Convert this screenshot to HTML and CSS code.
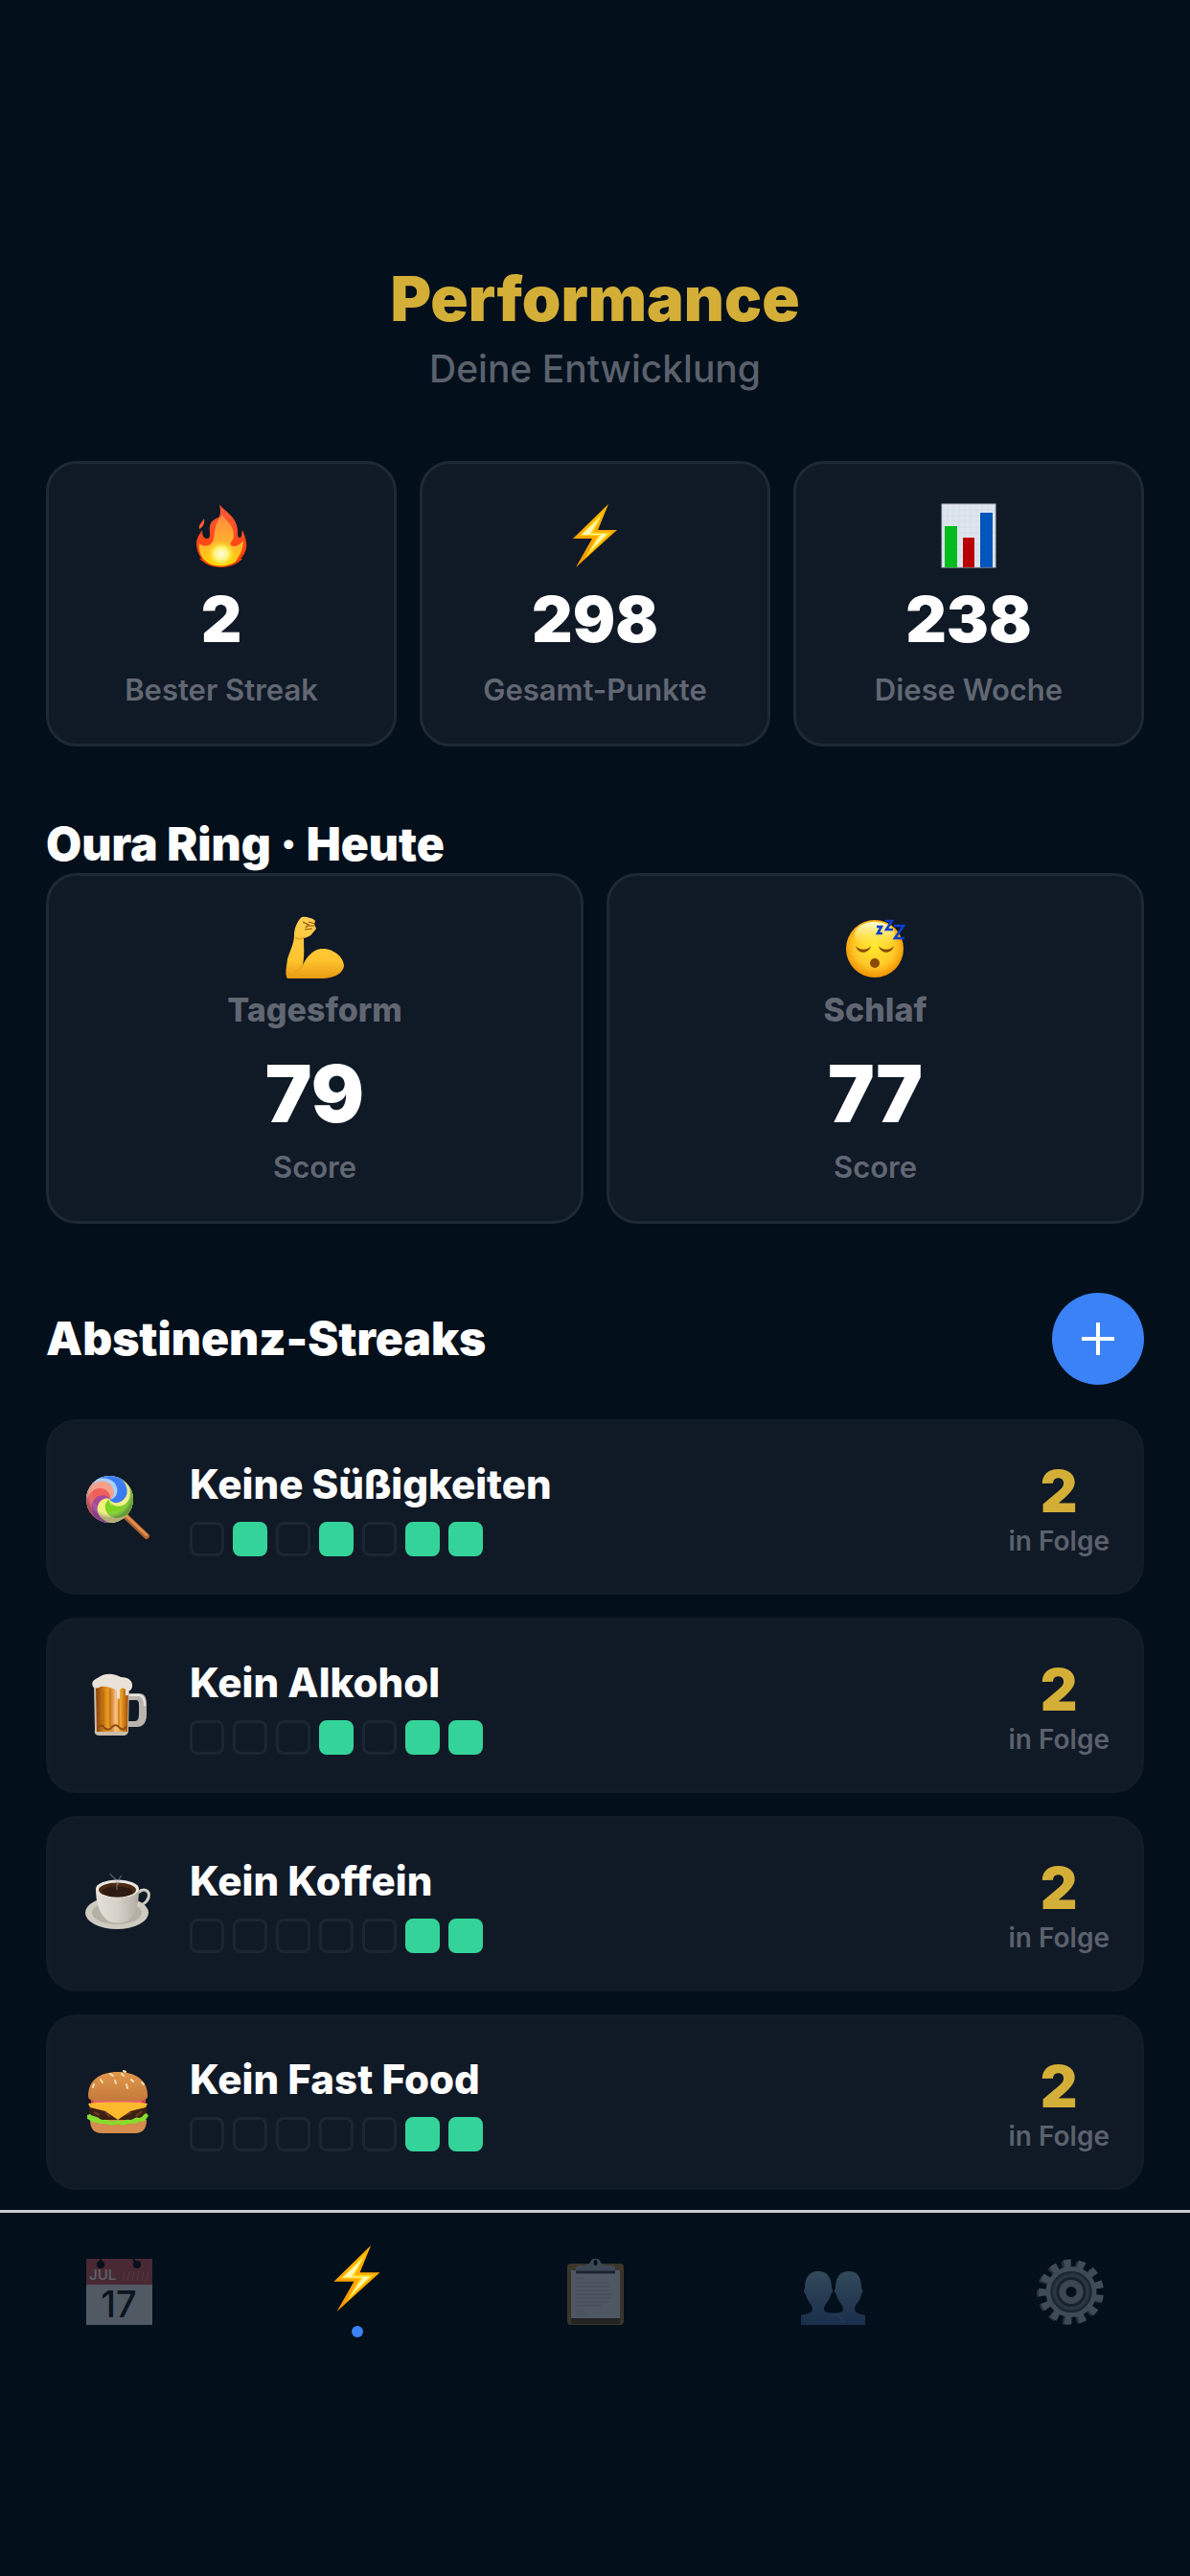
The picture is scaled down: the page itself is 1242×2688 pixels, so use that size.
FILE: index.html
```html
<!DOCTYPE html>
<html lang="de">
<head>
  <meta charset="UTF-8">
  <meta name="viewport" content="width=device-width, initial-scale=1.0">
  <title>Performance</title>
  <link rel="stylesheet" href="styles.css">
</head>
<body>
  <!-- shared gradients and the bolt, which is used twice -->
  <svg class="defs" aria-hidden="true">
    <defs>
      <linearGradient id="boltGrad" x1="0" y1="0" x2="0" y2="1">
        <stop offset="0" stop-color="#ffb800"/>
        <stop offset="1" stop-color="#ff9500"/>
      </linearGradient>
      <symbol id="bolt" viewBox="0 0 66 66">
        <path d="M47 0 L10 36 H30 L13 66 L56 27 H36 Z" fill="url(#boltGrad)"/>
        <path d="M42 8 L17 33 H36 L22 57 L50 29.500 H31 Z" fill="#ffd60a"/>
        <path d="M39 13 L19 32 H39 L26 51 L46 31 H28 Z" fill="#fff7b8"/>
      </symbol>
    </defs>
  </svg>

  <div class="app">
    <main class="content">
      <header class="page-header">
        <h1>Performance</h1>
        <p>Deine Entwicklung</p>
      </header>

      <section class="stats">
        <div class="card">
          <svg class="icon" viewBox="0 0 66 66" aria-hidden="true">
            <defs>
              <linearGradient id="fire" x1="0" y1="0" x2="0" y2="1">
                <stop offset="0" stop-color="#ff5a3c"/>
                <stop offset="1" stop-color="#ff3d00"/>
              </linearGradient>
              <linearGradient id="fireMid" x1="0" y1="0" x2="0" y2="1">
                <stop offset="0" stop-color="#ff8a3c"/>
                <stop offset="0.600" stop-color="#ffb52e"/>
                <stop offset="1" stop-color="#ffd500"/>
              </linearGradient>
              <radialGradient id="fireCore">
                <stop offset="0" stop-color="#fffde0"/>
                <stop offset="0.500" stop-color="#fff47a"/>
                <stop offset="1" stop-color="#ffd500" stop-opacity="0"/>
              </radialGradient>
            </defs>
            <path d="M31 0 C34 6 49 12 50 27 C50 32 50 35 52 35 C55 35 54 30 55 27 C58 34 60 40 59 46 C58 51 56 54 53 57 L55 57 C51 62 41 66 33 66 C23 66 14 62 10 56 L13 57 C9 53 7 47 7 41 C7 36 10 32 13 27 C13 32 14 36 18 36 C23 36 20 29 21 23 C22 18 25 16 30 14 C33 11 32 5 31 0 Z" fill="url(#fire)"/>
            <path d="M15 15 C16 20 14 24 10 26 C9 21 13 19 15 15 Z" fill="#ff5a3c"/>
            <path d="M34 11 C37 18 46 20 46 33 C46 39 41 39 43 43 C47 46 53 42 56 38 C56 48 51 55 48 60 C40 66 24 66 17 60 C12 56 9 49 10 41 C14 45 23 45 25 36 C27 27 25 22 34 11 Z" fill="url(#fireMid)"/>
            <ellipse cx="33" cy="52" rx="15" ry="14" fill="url(#fireCore)"/>
          </svg>
          <div class="stat-value">2</div>
          <div class="label">Bester Streak</div>
        </div>
        <div class="card">
          <svg class="icon" aria-hidden="true"><use href="#bolt"/></svg>
          <div class="stat-value">298</div>
          <div class="label">Gesamt-Punkte</div>
        </div>
        <div class="card">
          <svg class="icon" viewBox="0 0 66 66" aria-hidden="true">
            <rect x="5" y="0" width="56" height="66" fill="#dfe6ee"/>
            <path d="M5 6H61M5 12H61M5 18H61M5 24H61M5 30H61M5 36H61M5 42H61M5 48H61M5 54H61M5 60H61M11 0V66M17 0V66M23 0V66M29 0V66M35 0V66M41 0V66M47 0V66M53 0V66" stroke="#d2dee9" stroke-width="1"/>
            <rect x="5" y="0" width="56" height="66" fill="none" stroke="#b9bec4" stroke-width="1"/>
            <rect x="8" y="23" width="13" height="43" fill="#06bb1d"/>
            <rect x="27" y="35" width="12" height="31" fill="#b90000"/>
            <rect x="45" y="9" width="13" height="57" fill="#0456bd"/>
          </svg>
          <div class="stat-value">238</div>
          <div class="label">Diese Woche</div>
        </div>
      </section>

      <section class="section">
        <h2>Oura Ring · Heute</h2>
        <div class="scores">
          <div class="card">
            <svg class="icon" viewBox="0 0 66 66" aria-hidden="true">
              <defs>
                <linearGradient id="arm" x1="0" y1="0" x2="0" y2="1">
                  <stop offset="0" stop-color="#ffcf55"/>
                  <stop offset="0.700" stop-color="#ffc42e"/>
                  <stop offset="1" stop-color="#e89a12"/>
                </linearGradient>
              </defs>
              <path d="M19 1 C22 0 31 2 33 5 L32 8 L34 13 L30 18 C28 21 24 22 21 23 C21 32 22 42 20 51 C24 43 30 35 39 34 C50 33 62 41 63 51 C63 60 51 66 35 65 C26 65 12 65 4 65 C1 61 3 53 4 45 C6 37 11 29 11 20 C11 12 15 4 19 1 Z" fill="url(#arm)"/>
              <path d="M20 51 C18 55 15 57 11 58 M12 22 C15 25 19 24 21 22" fill="none" stroke="#e3a11d" stroke-width="1.500"/>
              <path d="M20 6 L26 9 L23 12 M26 6 L33 8 M25 10 L33 10 M22 14 L30 13" fill="none" stroke="#8a5200" stroke-width="1.200"/>
            </svg>
            <div class="score-name">Tagesform</div>
            <div class="score-value">79</div>
            <div class="label">Score</div>
          </div>
          <div class="card">
            <svg class="icon" viewBox="0 0 66 66" aria-hidden="true">
              <defs>
                <radialGradient id="face" cx="0.500" cy="0.450" r="0.550">
                  <stop offset="0" stop-color="#ffe92e"/>
                  <stop offset="0.650" stop-color="#ffc928"/>
                  <stop offset="1" stop-color="#f29100"/>
                </radialGradient>
                <linearGradient id="shine" x1="0" y1="0" x2="0" y2="1">
                  <stop offset="0" stop-color="#ffffd8"/>
                  <stop offset="1" stop-color="#fff45c" stop-opacity="0"/>
                </linearGradient>
              </defs>
              <circle cx="32" cy="34" r="30" fill="url(#face)"/>
              <ellipse cx="32" cy="19" rx="21" ry="13" fill="url(#shine)"/>
              <path d="M12 31 C16 36 24 36 28 31 C26 40 14 40 12 31 Z M36 31 C40 36 48 36 52 31 C50 40 38 40 36 31 Z" fill="#8a4a00"/>
              <ellipse cx="32" cy="49" rx="5" ry="5" fill="#8a4a00"/>
              <path d="M34 11 H39 L35 18 H40 M43 5 H50 L44 14 H51 M52 10 H62 L53 23 H63" fill="none" stroke="#0b3fcb" stroke-width="2.600"/>
            </svg>
            <div class="score-name">Schlaf</div>
            <div class="score-value">77</div>
            <div class="label">Score</div>
          </div>
        </div>
      </section>

      <section class="section">
        <div class="section-head">
          <h2>Abstinenz-Streaks</h2>
          <button class="add-btn" type="button" aria-label="Streak hinzufügen">
            <svg viewBox="0 0 36 36" aria-hidden="true"><path d="M18 1V35M1 18H35" stroke="#fff" stroke-width="4"/></svg>
          </button>
        </div>

        <div class="streaks">
          <div class="streak">
            <div class="streak-icon">
              <svg class="icon" viewBox="0 0 66 66" aria-hidden="true">
                <defs>
                  <clipPath id="candy"><circle r="24.500"/></clipPath>
                  <path id="swirl" d="M0 0 C-6 10 16 24 25 0 L30 26 L12.500 21.700 C-12.800 25.900 -11.700 -0.200 0 0 Z"/>
                  <radialGradient id="candyShade" cx="0.500" cy="0.400">
                    <stop offset="0.700" stop-color="#fff" stop-opacity="0"/>
                    <stop offset="1" stop-color="#3c2a6a" stop-opacity="0.350"/>
                  </radialGradient>
                </defs>
                <path d="M42 43 L63 63" stroke="#a85f30" stroke-width="6" stroke-linecap="round"/>
                <path d="M42 42 L63 62" stroke="#e09050" stroke-width="3" stroke-linecap="round"/>
                <g transform="translate(24.500 24.500)" clip-path="url(#candy)">
                  <circle r="25" fill="#f5f28a"/>
                  <use href="#swirl" fill="#7ed321" transform="rotate(-20)"/>
                  <use href="#swirl" fill="#f3f17a" transform="rotate(40)"/>
                  <use href="#swirl" fill="#a8489a" transform="rotate(88)"/>
                  <use href="#swirl" fill="#f0605a" transform="rotate(125)"/>
                  <use href="#swirl" fill="#f6a08a" transform="rotate(170)"/>
                  <use href="#swirl" fill="#a9d0fb" transform="rotate(215)"/>
                  <use href="#swirl" fill="#3b7cf2" transform="rotate(240)"/>
                  <path d="M0 0 C-6 10 16 24 25 0 L30 26 L12.500 21.700 C4 25 -6 14 0 0 Z" fill="#7ed321" transform="rotate(-35)"/>
                  <circle r="24.500" fill="url(#candyShade)"/>
                </g>
              </svg>
            </div>
            <div class="streak-info">
              <h3>Keine Süßigkeiten</h3>
              <div class="days">
                <span class="day"></span>
                <span class="day done"></span>
                <span class="day"></span>
                <span class="day done"></span>
                <span class="day"></span>
                <span class="day done"></span>
                <span class="day done"></span>
              </div>
            </div>
            <div class="streak-count">
              <div class="count">2</div>
              <div class="count-label">in Folge</div>
            </div>
          </div>

          <div class="streak">
            <div class="streak-icon">
              <svg class="icon" viewBox="0 0 66 66" aria-hidden="true">
                <defs>
                  <linearGradient id="beer" x1="0" y1="0" x2="1" y2="0">
                    <stop offset="0" stop-color="#8a3d08"/>
                    <stop offset="0.350" stop-color="#e89a1a"/>
                    <stop offset="0.500" stop-color="#d98a3a"/>
                    <stop offset="0.600" stop-color="#f5c08a"/>
                    <stop offset="0.750" stop-color="#f0a62a"/>
                    <stop offset="1" stop-color="#a04a08"/>
                  </linearGradient>
                </defs>
                <path d="M44 20 H55 C61 20 63 24 63 32 V42 C63 52 58 55 53 55 H44 V49 H51 C54 49 55 46 55 41 V32 C55 28 54 27 51 27 H44 Z" fill="#b9b5ae"/>
                <path d="M45 22 H55 C60 22 61 27 61 33" fill="none" stroke="#e8e6e1" stroke-width="2"/>
                <path d="M8 11 H45 L44 59 C44 62 42 64 38 64 H14 C10 64 8 62 9 58 Z" fill="#c9bfae"/>
                <path d="M10 12 H44 L43 60 H11 Z" fill="url(#beer)"/>
                <path d="M18 18V54M25 16V55M34 20V55" stroke="#b8640f" stroke-width="1"/>
                <path d="M12 56 Q16 51 19 56 Q23 60 27 55 Q31 51 35 56 Q39 60 42 54" fill="none" stroke="#8a4a10" stroke-width="2"/>
                <path d="M7 13 C4 6 11 5 15 2 C22 -2 31 0 36 3 C44 3 49 7 48 13 C47 17 45 18 44 17 V22 H41 V16 C38 14 36 14 35 17 V24 C35 27 32 27 32 24 V17 C27 14 20 12 15 13 C12 15 9 15 7 13 Z" fill="#e9e2d9"/>
              </svg>
            </div>
            <div class="streak-info">
              <h3>Kein Alkohol</h3>
              <div class="days">
                <span class="day"></span>
                <span class="day"></span>
                <span class="day"></span>
                <span class="day done"></span>
                <span class="day"></span>
                <span class="day done"></span>
                <span class="day done"></span>
              </div>
            </div>
            <div class="streak-count">
              <div class="count">2</div>
              <div class="count-label">in Folge</div>
            </div>
          </div>

          <div class="streak">
            <div class="streak-icon">
              <svg class="icon" viewBox="0 -2 66 66" aria-hidden="true">
                <defs>
                  <linearGradient id="cup" x1="0" y1="0" x2="1" y2="0">
                    <stop offset="0" stop-color="#e3e0d8"/>
                    <stop offset="0.500" stop-color="#d6d2c9"/>
                    <stop offset="1" stop-color="#b3aea4"/>
                  </linearGradient>
                </defs>
                <ellipse cx="32" cy="40" rx="33" ry="17" fill="#cfcbc1"/>
                <ellipse cx="32" cy="40" rx="26" ry="12" fill="#b5b0a5"/>
                <path d="M54 19 C60 13 67 17 65 24 C63 30 57 33 51 33" fill="none" stroke="#cfcbc1" stroke-width="3"/>
                <path d="M10 15 C10 30 14 43 24 49 C30 51 37 51 43 49 C52 43 55 30 55 15 Z" fill="url(#cup)"/>
                <ellipse cx="32.500" cy="15" rx="22.500" ry="9.500" fill="#e9e6df"/>
                <ellipse cx="32.500" cy="16" rx="19.500" ry="7.500" fill="#4a2a14"/>
                <ellipse cx="32.500" cy="18" rx="16" ry="5.500" fill="#2e1a10"/>
                <path d="M25 -1 C27 4 32 3 32 9 V16 M37 1 C33 4 35 7 33 11" fill="none" stroke="#9aa0a8" stroke-width="1.500" opacity="0.450"/>
              </svg>
            </div>
            <div class="streak-info">
              <h3>Kein Koffein</h3>
              <div class="days">
                <span class="day"></span>
                <span class="day"></span>
                <span class="day"></span>
                <span class="day"></span>
                <span class="day"></span>
                <span class="day done"></span>
                <span class="day done"></span>
              </div>
            </div>
            <div class="streak-count">
              <div class="count">2</div>
              <div class="count-label">in Folge</div>
            </div>
          </div>

          <div class="streak">
            <div class="streak-icon">
              <svg class="icon" viewBox="0 0 66 66" aria-hidden="true">
                <defs>
                  <linearGradient id="bun" x1="0" y1="0" x2="0" y2="1">
                    <stop offset="0" stop-color="#e0984a"/>
                    <stop offset="1" stop-color="#c57a3c"/>
                  </linearGradient>
                </defs>
                <path d="M4 51 H63 C63 60 59 65 51 65 H16 C8 65 4 60 4 51 Z" fill="#d58c4e"/>
                <path d="M3 35 H63 V44 C63 49 60 51 55 51 H11 C6 51 3 49 3 44 Z" fill="#3d2013"/>
                <path d="M8 43 L14 46 M20 43 L25 48 M40 46 L47 43 M52 47 L58 42" stroke="#6b3c26" stroke-width="2"/>
                <path d="M1 46 L4 45 C7 48 12 47 14 50 C18 52 21 50 24 52 C28 54 31 50 35 52 C39 53 41 50 45 51 C50 51 51 47 55 49 C59 49 59 45 63 44 L65 47 C62 50 62 53 58 53 C53 52 53 56 48 55 C43 54 41 58 36 56 C31 54 28 58 24 56 C19 54 15 56 11 54 C6 54 4 51 1 50 Z" fill="#86dd2b"/>
                <path d="M5 30 H62 V35 H5 Z" fill="#d93a4e"/>
                <path d="M8 32 H58" stroke="#f28a90" stroke-width="1"/>
                <path d="M2 34 C12 32 54 32 64 34 L62 38 L46 42 L33 51 L20 42 L4 38 Z" fill="#fdb92d"/>
                <path d="M2 26 C2 10 14 1 33 1 C52 1 64 10 64 26 C64 30 60 31 56 31 H10 C5 31 2 30 2 26 Z" fill="url(#bun)"/>
                <path d="M15 9 L17 12 M25 3 L28 5 M30 10 L31 13 M42 14 L43 18 M37 3 L39 5 M47 9 L49 11 M58 12 L60 14 M8 14 L7 17 M39 0 L41 1" stroke="#f7dfb2" stroke-width="2" stroke-linecap="round"/>
              </svg>
            </div>
            <div class="streak-info">
              <h3>Kein Fast Food</h3>
              <div class="days">
                <span class="day"></span>
                <span class="day"></span>
                <span class="day"></span>
                <span class="day"></span>
                <span class="day"></span>
                <span class="day done"></span>
                <span class="day done"></span>
              </div>
            </div>
            <div class="streak-count">
              <div class="count">2</div>
              <div class="count-label">in Folge</div>
            </div>
          </div>
        </div>
      </section>
    </main>

    <nav class="tabbar">
      <a class="tab" href="#" aria-label="Kalender">
        <svg class="tab-icon" viewBox="0 0 69 69">
          <rect width="69" height="69" fill="#e2e4ea"/>
          <rect width="69" height="27" fill="#c8585f"/>
          <circle cx="15" cy="6" r="4" fill="#04101c"/>
          <circle cx="53" cy="6" r="4" fill="#04101c"/>
          <path d="M15 0V5M49 0L52 5" stroke="#04101c" stroke-width="2"/>
          <path d="M38 23L40 13M43 23L45 13M48 23L50 13M53 23L55 13M58 23L60 13M63 23L65 13" stroke="#dd9396" stroke-width="1"/>
          <text class="cal-month" x="3" y="22">JUL</text>
          <text class="cal-day" x="34" y="61">17</text>
        </svg>
      </a>
      <a class="tab active" href="#" aria-label="Performance" aria-current="page">
        <svg class="tab-icon"><use href="#bolt"/></svg>
        <span class="dot"></span>
      </a>
      <a class="tab" href="#" aria-label="Aufgaben">
        <svg class="tab-icon" viewBox="0 0 69 69">
          <rect x="5" y="5" width="59" height="64" rx="4" fill="#a37c48"/>
          <rect x="9" y="62" width="51" height="6" fill="#5d4a33"/>
          <rect x="9" y="12" width="51" height="50" fill="#d9dde6"/>
          <path d="M14 20H22M14 25H48M14 29H50M14 33H50M14 37H52M14 41H50M14 45H48M14 49H42M14 55H22M14 58H26" stroke="#c3c8d2" stroke-width="1.500"/>
          <path d="M14 14 V10 C14 7 17 7 20 7 C26 7 28 6 30 2 C31 -1 38 -1 39 2 C41 6 43 7 49 7 C52 7 55 7 55 10 V14 Z" fill="#aab3c2"/>
          <path d="M14 14H55" stroke="#4c515c" stroke-width="3"/>
          <ellipse cx="34.500" cy="4" rx="2" ry="3" fill="#04101c"/>
        </svg>
      </a>
      <a class="tab" href="#" aria-label="Freunde">
        <svg class="tab-icon" viewBox="0 0 69 69">
          <defs>
            <linearGradient id="people" x1="0" y1="0" x2="0" y2="1">
              <stop offset="0" stop-color="#8cb4d2"/>
              <stop offset="1" stop-color="#456aa5"/>
            </linearGradient>
          </defs>
          <path d="M1 69 V59 C8 57 13 57 13 52 C13 48 7 44 6 37 C3 35 4 32 5 31 C5 20 9 13 19 13 C29 13 33 20 33 31 C34 32 35 35 32 37 C31 44 25 48 25 52 C25 57 30 56 35 57 C40 56 45 57 45 52 C45 48 39 44 38 37 C35 35 36 32 37 31 C37 20 41 13 51 13 C61 13 64 20 64 31 C66 32 66 35 64 37 C63 44 57 48 57 52 C57 57 62 57 68 59 V69 Z" fill="url(#people)"/>
          <path d="M33 57C40 58 44 62 45 67" fill="none" stroke="#7ba7cf" stroke-width="1"/>
        </svg>
      </a>
      <a class="tab" href="#" aria-label="Einstellungen">
        <svg class="tab-icon" viewBox="0 0 69 69">
          <g transform="translate(32.500 35.500)">
            <circle r="28" fill="none" stroke="#6f6a6a" stroke-width="11" stroke-dasharray="6.500 7.033" transform="rotate(6)"/>
          </g>
          <g transform="translate(35 34.500)">
            <circle r="29" fill="none" stroke="#b3bcc9" stroke-width="10" stroke-dasharray="7 7.016" transform="rotate(6)"/>
            <circle r="22" fill="#67737f"/>
            <circle r="24" fill="none" stroke="#adb7c4" stroke-width="5"/>
            <circle r="20.500" fill="none" stroke="#4a5361" stroke-width="2"/>
            <circle r="17" fill="none" stroke="#76818e" stroke-width="2"/>
            <circle r="14" fill="none" stroke="#3f4754" stroke-width="3"/>
            <circle r="9" fill="#04101c" stroke="#a3adba" stroke-width="7"/>
          </g>
        </svg>
      </a>
    </nav>
  </div>
</body>
</html>
```

FILE: styles.css
```css
:root {
  --bg: #030f1b;
  --card: #101926;
  --border: #1e2936;
  --gold: #d4af37;
  --blue: #3b82f6;
  --green: #34d399;
  --muted: #616772;
}

* {
  margin: 0;
  padding: 0;
  box-sizing: border-box;
}

body {
  font-family: 'Inter', 'Liberation Sans', sans-serif;
  background-color: var(--bg);
  color: #fff;
}

.defs {
  position: absolute;
  width: 0;
  height: 0;
}

.app {
  display: flex;
  flex-direction: column;
  min-height: 100vh;
}

.content {
  padding: 275px 48px 21px;
}

.page-header {
  text-align: center;
  margin-bottom: 72px;
}

.page-header h1 {
  font-size: 65px;
  line-height: 74px;
  font-weight: 900;
  color: var(--gold);
  margin-bottom: 12px;
}

.page-header p {
  font-size: 39px;
  line-height: 48px;
  font-weight: 500;
  color: #5b616c;
}

h2 {
  font-size: 48px;
  line-height: 60px;
  font-weight: 900;
}

/* Cards */
.stats,
.scores {
  display: flex;
  gap: 24px;
}

.card {
  flex: 1;
  display: flex;
  flex-direction: column;
  align-items: center;
  padding: 42px 12px 36px;
  background-color: var(--card);
  border: 3px solid var(--border);
  border-radius: 32px;
}

.icon {
  display: block;
  width: 66px;
  height: 66px;
  overflow: visible;
}

.stat-value {
  font-size: 66px;
  line-height: 72px;
  font-weight: 900;
  margin: 18px 0;
}

.label {
  font-size: 31px;
  line-height: 40px;
  font-weight: 600;
  color: var(--muted);
}

.score-name {
  font-size: 34px;
  line-height: 40px;
  font-weight: 800;
  color: var(--muted);
  margin-top: 12px;
}

.score-value {
  font-size: 82px;
  line-height: 100px;
  font-weight: 900;
  margin: 18px 0 6px;
}

.section {
  margin-top: 72px;
}

.section-head {
  display: flex;
  justify-content: space-between;
  align-items: center;
  margin-bottom: 36px;
}

.add-btn {
  display: flex;
  align-items: center;
  justify-content: center;
  width: 96px;
  height: 96px;
  border: none;
  border-radius: 50%;
  background-color: var(--blue);
  cursor: pointer;
}

.add-btn svg {
  width: 36px;
  height: 36px;
}

/* Streak rows */
.streaks {
  display: flex;
  flex-direction: column;
  gap: 24px;
}

.streak {
  display: flex;
  align-items: center;
  gap: 39px;
  padding: 36px 33px 36px 36px;
  background-color: var(--card);
  border: 3px solid #121c29;
  border-radius: 32px;
}

.streak-icon {
  display: flex;
  justify-content: center;
  width: 72px;
}

.streak-info {
  flex: 1;
}

.streak-info h3 {
  font-size: 42px;
  line-height: 54px;
  font-weight: 800;
  margin-bottom: 12px;
}

.days {
  display: flex;
  gap: 9px;
}

.day {
  width: 36px;
  height: 36px;
  border: 3px solid #1c2532;
  border-radius: 8px;
}

.day.done {
  background-color: var(--green);
  border-color: var(--green);
}

.streak-count {
  text-align: center;
}

.count {
  font-size: 60px;
  line-height: 72px;
  font-weight: 900;
  color: var(--gold);
}

.count-label {
  font-size: 28px;
  line-height: 33px;
  font-weight: 600;
  color: #5b616c;
}

/* Bottom navigation */
.tabbar {
  flex: 1;
  display: flex;
  align-items: flex-start;
  padding-top: 34px;
  background-color: var(--bg);
  border-top: 3px solid #c8cccf;
}

.tab {
  flex: 1;
  display: flex;
  flex-direction: column;
  align-items: center;
  justify-content: center;
  height: 96px;
  text-decoration: none;
}

.tab-icon {
  width: 69px;
  height: 69px;
  opacity: 0.35;
  overflow: visible;
}

.tab.active .tab-icon {
  opacity: 1;
}

.dot {
  width: 12px;
  height: 12px;
  margin-top: 15px;
  border-radius: 50%;
  background-color: var(--blue);
}

.cal-month {
  font-size: 15px;
  font-weight: 500;
  fill: #fff;
}

.cal-day {
  font-size: 38px;
  font-weight: 500;
  text-anchor: middle;
  fill: #1a1f2a;
}
```
